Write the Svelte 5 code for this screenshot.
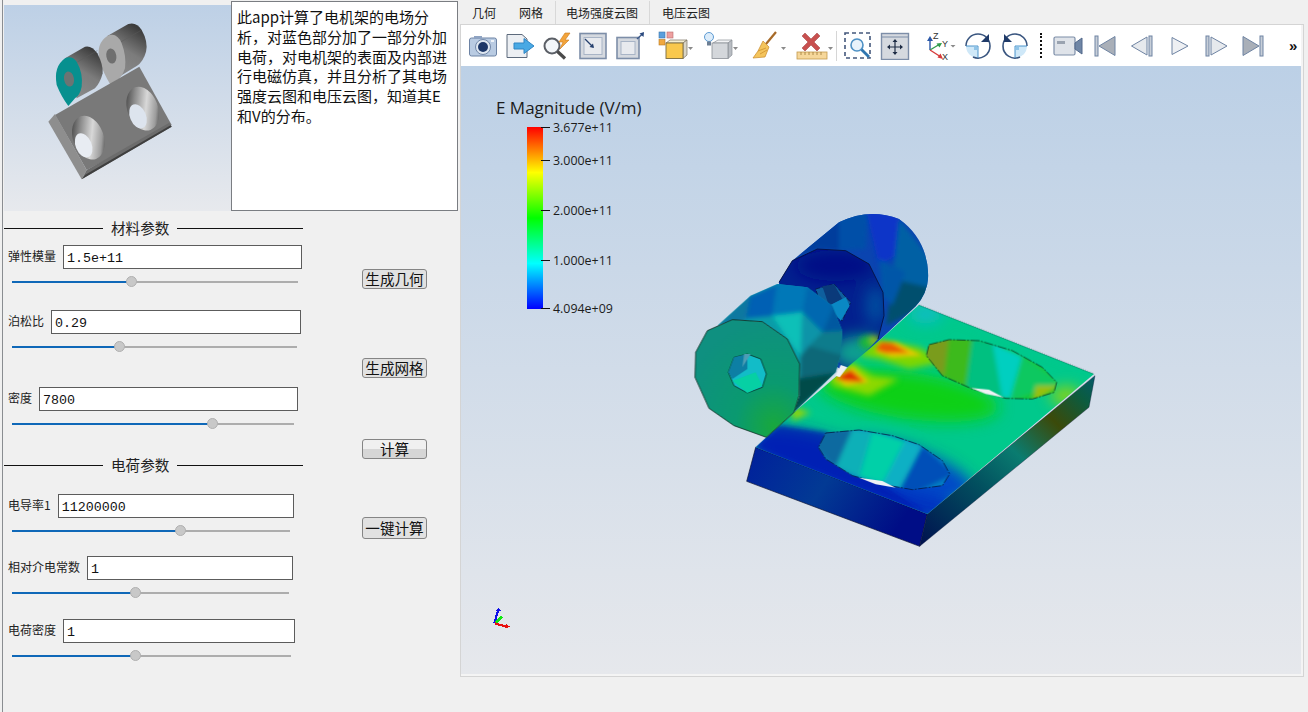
<script>
  const materialRows = [
    { label: '弹性模量', value: '1.5e+11', inputWidth: 239, sliderWidth: 286, pct: 41.6, gap: 7 },
    { label: '泊松比', value: '0.29', inputWidth: 250, sliderWidth: 285, pct: 37.4, gap: 23 },
    { label: '密度', value: '7800', inputWidth: 259, sliderWidth: 282, pct: 71.8, gap: 35 }
  ]
  const chargeRows = [
    { label: '电导率1', value: '11200000', inputWidth: 236, sliderWidth: 278, pct: 60.9, gap: 19 },
    { label: '相对介电常数', value: '1', inputWidth: 206, sliderWidth: 277, pct: 44.2, gap: 20 },
    { label: '电荷密度', value: '1', inputWidth: 232, sliderWidth: 279, pct: 44.2, gap: 21 }
  ]
  const tabs = ['几何', '网格', '电场强度云图', '电压云图']
  const ticks = ['3.677e+11', '3.000e+11', '2.000e+11', '1.000e+11', '4.094e+09']
</script>

<div class="page">
  <div class="left">
    <div class="top">
      <div class="preview">
        <!-- viewBox is 3x page scale, same as the crop the shapes were read from -->
        <svg width="227" height="206" viewBox="-48 -15 681 618">
          <defs>
            <linearGradient id="cylA" x1="0.15" y1="1" x2="0.6" y2="0">
              <stop offset="0" stop-color="#8c8c8c" />
              <stop offset="0.55" stop-color="#7c7c7c" />
              <stop offset="1" stop-color="#3c3c3c" />
            </linearGradient>
            <linearGradient id="holeA" x1="0" y1="0.1" x2="1" y2="0.8">
              <stop offset="0" stop-color="#333" />
              <stop offset="0.3" stop-color="#8a8a8a" />
              <stop offset="0.6" stop-color="#d8d8d8" />
              <stop offset="0.85" stop-color="#9c9c9c" />
              <stop offset="1" stop-color="#484848" />
            </linearGradient>
          </defs>
          <!-- rear lug -->
          <path d="M262 78 L325 42 Q350 35 365 60 Q385 95 378 125 Q370 155 350 168 L290 205 Z" fill="url(#cylA)" />
          <path d="M302 96 L365 60" stroke="#5a5a5a" stroke-width="1.4" />
          <path d="M262 78 Q290 65 305 100 Q320 140 315 175 Q305 205 290 210 L272 225 Q250 190 238 150 Q228 100 262 78 Z" fill="#a9a9a9" />
          <ellipse cx="274" cy="138" rx="15" ry="23" transform="rotate(-10 274 138)" fill="#6f6f6f" />
          <!-- front lug -->
          <path d="M135 145 L195 110 Q215 105 232 130 Q250 165 248 190 Q240 220 225 235 L170 265 Z" fill="url(#cylA)" />
          <path d="M172 156 L232 122" stroke="#5a5a5a" stroke-width="1.4" />
          <path d="M135 145 Q155 135 170 155 Q190 190 185 230 Q180 255 165 265 L145 288 Q125 262 110 225 Q100 170 135 145 Z" fill="#07908f" />
          <ellipse cx="147" cy="207" rx="15" ry="23" transform="rotate(-10 147 207)" fill="#6b7473" />
          <!-- plate -->
          <path d="M105 315 L358 170 L455 345 L200 480 Z" fill="#797979" />
          <path d="M85 335 L105 312 L200 480 L185 508 Z" fill="#8e8e8e" />
          <path d="M185 508 L200 480 L448 338 L455 350 Z" fill="#6c6c6c" />
          <path d="M185 508 L196 494 L452 346 L455 350 Z" fill="#3f3f3f" />
          <!-- countersunk holes -->
          <ellipse cx="205" cy="383" rx="46" ry="68" transform="rotate(-20 205 383)" fill="url(#holeA)" />
          <ellipse cx="191" cy="406" rx="24" ry="38" transform="rotate(-22 191 406)" fill="#e8ecf2" />
          <ellipse cx="368" cy="296" rx="46" ry="68" transform="rotate(-20 368 296)" fill="url(#holeA)" />
          <ellipse cx="354" cy="319" rx="24" ry="38" transform="rotate(-22 354 319)" fill="#dde4ee" />
        </svg>
      </div>
      <div class="note">此app计算了电机架的电场分析，对蓝色部分加了一部分外加电荷，对电机架的表面及内部进行电磁仿真，并且分析了其电场强度云图和电压云图，知道其E和V的分布。</div>
    </div>

    <div class="controls">
      <div class="params">
        <div class="section first"><span>材料参数</span></div>
        {#each materialRows as row}
          <div class="row" style="margin-top: {row.gap}px">
            <div class="field">
              <span class="label">{row.label}</span>
              <input class="num" value={row.value} style="width: {row.inputWidth}px" />
            </div>
            <input class="slider" type="range" min="0" max="100" step="0.1" value={row.pct} style="width: {row.sliderWidth}px; --pct: {row.pct}%" />
          </div>
        {/each}
        <div class="section second"><span>电荷参数</span></div>
        {#each chargeRows as row}
          <div class="row" style="margin-top: {row.gap}px">
            <div class="field">
              <span class="label">{row.label}</span>
              <input class="num" value={row.value} style="width: {row.inputWidth}px" />
            </div>
            <input class="slider" type="range" min="0" max="100" step="0.1" value={row.pct} style="width: {row.sliderWidth}px; --pct: {row.pct}%" />
          </div>
        {/each}
      </div>
      <div class="actions">
        <button class="b1">生成几何</button>
        <button class="b2">生成网格</button>
        <button class="b3">计算</button>
        <button class="b4">一键计算</button>
      </div>
    </div>
  </div>

  <div class="right">
    <div class="tabs">
      {#each tabs as tab}
        <span class="tab">{tab}</span>
      {/each}
    </div>
    <div class="frame">
      <div class="toolbar">
        <!-- camera -->
        <svg class="ic m5" width="30" height="26" viewBox="0 0 30 26">
          <rect x="1.5" y="5" width="27" height="18" rx="2" fill="#b9cbe2" stroke="#6d83a4" />
          <rect x="6" y="3" width="8" height="3" fill="#8ea3c2" />
          <circle cx="15" cy="14" r="7.5" fill="#dfe7f1" stroke="#7187a8" />
          <circle cx="15" cy="14" r="5" fill="#1d3768" />
          <rect x="23" y="7" width="3" height="2" fill="#eef3f9" />
        </svg>
        <!-- export -->
        <svg class="ic m7" width="30" height="28" viewBox="0 0 30 28">
          <path d="M2 2.5 H17 L22 7 V25.5 H2 Z" fill="#eceff3" stroke="#5d6a7c" />
          <path d="M9 11 H19 V6.5 L29 14 L19 21.5 V17 H9 Z" fill="#49a9e4" stroke="#2f85c4" />
        </svg>
        <!-- zoom bolt -->
        <svg class="ic m6" width="30" height="28" viewBox="0 0 30 28">
          <circle cx="11" cy="14" r="7.5" fill="#f3f6f9" stroke="#5b5f66" stroke-width="2" />
          <path d="M16.5 19.5 L24 26.5" stroke="#4a4a4a" stroke-width="3.2" />
          <path d="M24 1 L18 10 H22 L19 17 L28 8 H24 L29 1 Z" fill="#f3a43b" stroke="#c97b1c" stroke-width="0.6" />
        </svg>
        <!-- zoom to box -->
        <svg class="ic m7" width="30" height="28" viewBox="0 0 30 28">
          <rect x="2" y="1.5" width="26" height="25" fill="#d5d9df" stroke="#7d8ea8" stroke-width="1.6" />
          <rect x="6" y="5.5" width="18" height="17" fill="#e8eaee" stroke="#a8b4c6" />
          <path d="M7 7 L15 15" stroke="#26406e" stroke-width="1.2" />
          <path d="M16 16 L11.5 15 L15 11.5 Z" fill="#26406e" />
        </svg>
        <!-- zoom out box -->
        <svg class="ic m7" width="30" height="28" viewBox="0 0 30 28">
          <rect x="2" y="5.5" width="22" height="21" fill="#d5d9df" stroke="#7d8ea8" stroke-width="1.6" />
          <rect x="6" y="9.5" width="14" height="13" fill="#e8eaee" stroke="#a8b4c6" />
          <path d="M22 7 L28 1.5" stroke="#3d5a8a" stroke-width="1.4" />
          <path d="M29 0 L28.5 5 L24.5 1.5 Z" fill="#2b4a7f" />
        </svg>
        <!-- representation cube -->
        <svg class="ic m13" width="38" height="30" viewBox="0 0 38 30">
          <rect x="1" y="1" width="6" height="6" fill="#5a9fdc" stroke="#3c77ad" stroke-width="0.6" />
          <rect x="9" y="1" width="6" height="6" fill="#eea0a0" stroke="#b86b6b" stroke-width="0.6" />
          <rect x="1" y="8.5" width="6" height="5.5" fill="#f0a840" stroke="#b87a22" stroke-width="0.6" />
          <path d="M8 12 L12 9 H29 L25 12 Z" fill="#f6efd0" stroke="#7a7160" stroke-width="0.7" />
          <path d="M25 12 L29 9 V24 L25 27.5 Z" fill="#d9d5c6" stroke="#7a7160" stroke-width="0.7" />
          <rect x="8" y="12" width="17" height="15.5" fill="#f9c84c" stroke="#7a6a3e" stroke-width="0.9" />
          <path d="M30 16 H35 L32.5 19 Z" fill="#8a8a8a" />
        </svg>
        <!-- light cube -->
        <svg class="ic m7" width="38" height="30" viewBox="0 0 38 30">
          <circle cx="6" cy="6" r="4.5" fill="#dcecfa" stroke="#5d9bd2" />
          <rect x="4" y="10.5" width="4" height="4" fill="#6d7f94" />
          <path d="M10 12 L15 9 H29 L25 12 Z" fill="#f2f3f5" stroke="#8a8f96" stroke-width="0.7" />
          <path d="M25 12 L29 9 V24 L25 27.5 Z" fill="#b9bdc3" stroke="#8a8f96" stroke-width="0.7" />
          <rect x="9" y="12" width="16" height="15.5" fill="#d4d7db" stroke="#8a8f96" stroke-width="0.8" />
          <path d="M30 16 H35 L32.5 19 Z" fill="#8a8a8a" />
        </svg>
        <!-- broom -->
        <svg class="ic m11" width="38" height="30" viewBox="0 0 38 30">
          <path d="M24 1 L14 13" stroke="#a76a28" stroke-width="2.2" />
          <path d="M11 10 L17 16 L13 26 L1 27 L6 20 Z" fill="#f4c45c" stroke="#c98a2a" stroke-width="0.7" />
          <path d="M6 20 L14 17 M8 23 L15 19" stroke="#c98a2a" stroke-width="0.7" />
          <path d="M29 16 H34 L31.5 19 Z" fill="#8a8a8a" />
        </svg>
        <!-- delete ruler -->
        <svg class="ic m6" width="38" height="30" viewBox="0 0 38 30">
          <path d="M7 3 L13 9 L19 3 L22 6 L16 12 L22 18 L19 21 L13 15 L7 21 L4 18 L10 12 L4 6 Z" fill="#c8504f" stroke="#9e3b3a" stroke-width="0.5" transform="translate(2 -1)" />
          <rect x="1" y="21" width="30" height="7" fill="#f6d79a" stroke="#c49a4d" stroke-width="0.8" />
          <path d="M5 21 V24 M9 21 V24 M13 21 V24 M17 21 V24 M21 21 V24 M25 21 V24" stroke="#a07a35" stroke-width="0.8" />
          <path d="M32 16 H37 L34.5 19 Z" fill="#8a8a8a" />
        </svg>
        <span class="divider"></span>
        <!-- rubber band zoom -->
        <svg class="ic m6" width="30" height="30" viewBox="0 0 30 30">
          <rect x="2" y="2" width="25" height="25" fill="none" stroke="#44587c" stroke-width="1.6" stroke-dasharray="4 3" />
          <circle cx="14" cy="14" r="6" fill="#e7f2fb" stroke="#4d90c4" stroke-width="1.6" />
          <path d="M18.5 18.5 L26 26" stroke="#2f76b0" stroke-width="2.8" />
        </svg>
        <!-- reset -->
        <svg class="ic m7" width="30" height="28" viewBox="0 0 30 28">
          <rect x="1.5" y="1.5" width="27" height="26" fill="#d5d9df" stroke="#7d8ea8" stroke-width="1.4" />
          <path d="M1.5 5 H28.5" stroke="#7d8ea8" />
          <path d="M15 8 V22 M8 15 H22" stroke="#1e2c44" stroke-width="1.2" />
          <path d="M15 7 L12.5 10 H17.5 Z M15 23 L12.5 20 H17.5 Z M7 15 L10 12.5 V17.5 Z M23 15 L20 12.5 V17.5 Z" fill="#1e2c44" />
        </svg>
        <!-- axes -->
        <svg class="ic m13" width="34" height="30" viewBox="0 0 34 30">
          <path d="M7 19 V8" stroke="#2b58a8" stroke-width="1.4" />
          <path d="M7 5 L4 10 H10 Z" fill="#2b58a8" />
          <path d="M7 19 L17 13" stroke="#2f9c4a" stroke-width="1.4" />
          <path d="M19 12 L13.5 12.5 L16.5 16.5 Z" fill="#2f9c4a" />
          <path d="M7 19 L18 26" stroke="#d63a3a" stroke-width="1.4" />
          <path d="M20 28 L14.5 26.5 L17.5 22.5 Z" fill="#d63a3a" />
          <text x="10" y="8" class="axis">Z</text>
          <text x="19" y="16" class="axis">Y</text>
          <text x="19" y="29" class="axis">X</text>
          <path d="M27.5 14 H32.5 L30 16.5 Z" fill="#8a8a8a" />
        </svg>
        <!-- rotate cw -->
        <svg class="ic m6" width="30" height="30" viewBox="0 0 30 30">
          <path d="M3 15 H15 V27 A12 12 0 0 1 3 15 Z" fill="#cfe8f8" />
          <path d="M3 15 A12 12 0 1 1 27 15 A12 12 0 0 1 10 26" fill="none" stroke="#39557f" stroke-width="1.6" />
          <path d="M3 15 H15 M15 15 V27" stroke="#3b8bc6" stroke-width="0.9" />
          <rect x="11" y="15.5" width="3.5" height="3.5" fill="#8fc4e8" />
          <path d="M26 3 V11 H18 Z" fill="#1f3a68" />
        </svg>
        <!-- rotate ccw -->
        <svg class="ic m7" width="30" height="30" viewBox="0 0 30 30">
          <path d="M15 15 H27 A12 12 0 0 1 15 27 Z" fill="#cfe8f8" />
          <path d="M27 15 A12 12 0 1 0 3 15 A12 12 0 0 0 20 26" fill="none" stroke="#39557f" stroke-width="1.6" />
          <path d="M15 15 H27 M15 15 V27" stroke="#3b8bc6" stroke-width="0.9" />
          <rect x="15.5" y="15.5" width="3.5" height="3.5" fill="#8fc4e8" />
          <path d="M4 3 V11 H12 Z" fill="#1f3a68" />
        </svg>
        <span class="dots"></span>
        <!-- video camera -->
        <svg class="ic m11" width="30" height="22" viewBox="0 0 30 22">
          <rect x="1" y="2" width="21" height="18" rx="1.5" fill="#dfe3e9" stroke="#7d8ea8" stroke-width="1.2" />
          <rect x="4" y="6" width="8" height="3" fill="#9aa3b0" />
          <path d="M22 8 L29 3 V19 L22 14 Z" fill="#6f86a6" stroke="#52698b" />
        </svg>
        <!-- first -->
        <svg class="ic m10" width="24" height="22" viewBox="0 0 24 22">
          <rect x="2" y="1" width="3" height="20" fill="#c7ced8" stroke="#6f84a3" />
          <path d="M22 1.5 V20.5 L6 11 Z" fill="#a9afb8" stroke="#6f84a3" />
        </svg>
        <!-- back -->
        <svg class="ic m13" width="24" height="22" viewBox="0 0 24 22">
          <path d="M17 2 V20 L1.5 11 Z" fill="#e6e9ed" stroke="#6f84a3" />
          <rect x="19" y="1" width="3" height="20" fill="#c7ced8" stroke="#6f84a3" />
        </svg>
        <!-- play -->
        <svg class="ic m14" width="24" height="22" viewBox="0 0 24 22">
          <path d="M4 2.5 V19.5 L20 11 Z" fill="#eef0f3" stroke="#6f84a3" />
        </svg>
        <!-- forward -->
        <svg class="ic m12" width="24" height="22" viewBox="0 0 24 22">
          <rect x="2" y="1" width="3" height="20" fill="#c7ced8" stroke="#6f84a3" />
          <path d="M7 2 V20 L23 11 Z" fill="#e6e9ed" stroke="#6f84a3" />
        </svg>
        <!-- last -->
        <svg class="ic m13" width="24" height="22" viewBox="0 0 24 22">
          <path d="M2 1.5 V20.5 L18 11 Z" fill="#a9afb8" stroke="#6f84a3" />
          <rect x="19" y="1" width="3" height="20" fill="#c7ced8" stroke="#6f84a3" />
        </svg>
        <span class="more">»</span>
      </div>

      <div class="view">
        <div class="legend">
          <div class="legend-title">E Magnitude (V/m)</div>
          <div class="scale">
            <div class="bar"></div>
            <div class="ticks">
              {#each ticks as t, i}
                <div class="tick t{i}"><i></i><span>{t}</span></div>
              {/each}
            </div>
          </div>
        </div>

        <!-- field result, drawn in 3x coordinates -->
        <svg class="model" width="430" height="360" viewBox="0 0 1290 1080">
          <defs>
            <filter id="soft" x="-30%" y="-30%" width="160%" height="160%"><feGaussianBlur stdDeviation="22" /></filter>
            <filter id="soft2" x="-30%" y="-30%" width="160%" height="160%"><feGaussianBlur stdDeviation="9" /></filter>
            <filter id="soft3" x="-10%" y="-10%" width="120%" height="120%"><feGaussianBlur stdDeviation="6" /></filter>
            <clipPath id="plateClip"><path d="M720 318 L1245 525 L745 945 L230 745 L345 640 L600 425 Z" /></clipPath>
            <clipPath id="rearClip"><path d="M300 250 L340 185 L480 70 Q570 25 660 60 Q745 120 748 230 Q745 285 710 322 L600 425 L500 520 L300 400 Z" /></clipPath>
            <clipPath id="rearFace"><path d="M300 250 L340 185 L415 150 L500 155 L570 195 L612 280 L615 350 L597 420 L500 520 L420 400 Z" /></clipPath>
            <clipPath id="frontBody"><path d="M115 380 L215 290 L295 255 L385 265 L460 320 L490 395 L485 470 L470 520 L345 640 L362 590 L362 495 L325 420 L250 368 L160 362 Z" /></clipPath>
            <clipPath id="hole1"><path d="M750 437 L810 422 L900 425 L1000 455 L1090 505 L1133 550 L1125 580 L1060 600 L980 598 L880 570 L790 530 L742 470 Z" /></clipPath>
            <clipPath id="hole2"><path d="M440 702 L540 693 L640 710 L720 737 L790 785 L812 825 L790 860 L700 872 L620 858 L520 830 L440 780 L418 745 Z" /></clipPath>
            <linearGradient id="frontSide" x1="0" y1="0" x2="1" y2="0.35">
              <stop offset="0" stop-color="#001f9c" />
              <stop offset="0.5" stop-color="#023a94" />
              <stop offset="1" stop-color="#000d86" />
            </linearGradient>
            <linearGradient id="rightSide" x1="0" y1="1" x2="1" y2="0">
              <stop offset="0" stop-color="#00104f" />
              <stop offset="0.35" stop-color="#02505f" />
              <stop offset="0.55" stop-color="#0a7c70" />
              <stop offset="0.75" stop-color="#3b4a0a" />
              <stop offset="0.9" stop-color="#0b5c40" />
              <stop offset="1" stop-color="#04596a" />
            </linearGradient>
            <radialGradient id="faceFill" cx="0.75" cy="0.9" r="0.9">
              <stop offset="0" stop-color="#18a83e" />
              <stop offset="0.4" stop-color="#0a9a70" />
              <stop offset="1" stop-color="#0f9080" />
            </radialGradient>
          </defs>

          <!-- rear cylinder body -->
          <g clip-path="url(#rearClip)">
            <rect x="280" y="20" width="500" height="520" fill="#0a44b0" />
            <g filter="url(#soft3)">
              <path d="M320 180 L480 60 L500 155 L415 150 Z" fill="#033e9c" />
              <path d="M480 60 L570 20 L560 150 L480 155 Z" fill="#0050a8" />
              <path d="M560 30 L660 50 L700 140 L600 200 Z" fill="#0a34c8" />
              <path d="M660 60 L770 200 L770 290 L640 240 Z" fill="#0260a4" />
              <path d="M640 240 L770 270 L700 340 L620 380 Z" fill="#064f6e" />
              <path d="M600 180 L680 220 L640 320 L610 290 Z" fill="#0457a8" />
            </g>
          </g>
          <!-- rear cylinder face -->
          <g clip-path="url(#rearFace)">
            <rect x="280" y="140" width="350" height="390" fill="#02208e" />
            <g filter="url(#soft)">
              <ellipse cx="470" cy="200" rx="120" ry="46" fill="#000f86" />
              <ellipse cx="590" cy="320" rx="30" ry="60" fill="#0250a0" />
              <ellipse cx="540" cy="460" rx="80" ry="50" fill="#0aa090" />
            </g>
            <g filter="url(#soft2)">
              <ellipse cx="570" cy="430" rx="30" ry="22" fill="#1eb838" />
              <ellipse cx="588" cy="422" rx="12" ry="12" fill="#a8c000" />
            </g>
          </g>
          <path d="M300 250 L340 185 L415 150 L500 155 L570 195 L612 280 L615 350 L597 420" fill="none" stroke="#06103a" stroke-width="2.5" />
          <path d="M410 270 L465 255 L515 310 L490 365 L430 330 Z" fill="#0f5f9e" stroke="#06103a" stroke-width="2" stroke-dasharray="14 5" />
          <path d="M430 262 L465 256 L490 300 L450 320 Z" fill="#0a3a7a" />
          <path d="M450 320 L500 295 L512 320 L485 365 Z" fill="#0a88c4" />

          <!-- plate side faces -->
          <path d="M230 745 L745 945 L722 1042 L203 847 Z" fill="url(#frontSide)" stroke="#0a1030" stroke-width="2" />
          <path d="M745 945 L1248 530 L1230 625 L722 1042 Z" fill="url(#rightSide)" stroke="#0a1030" stroke-width="1" />

          <!-- plate top -->
          <g clip-path="url(#plateClip)">
            <rect x="200" y="300" width="1080" height="680" fill="#00c98c" />
            <g filter="url(#soft)">
              <ellipse cx="520" cy="830" rx="330" ry="85" transform="rotate(21 520 830)" fill="#0030c0" />
              <ellipse cx="700" cy="810" rx="200" ry="60" transform="rotate(21 700 810)" fill="#0248c8" />
              <ellipse cx="690" cy="590" rx="270" ry="70" transform="rotate(8 690 590)" fill="#0cd018" />
              <ellipse cx="1010" cy="380" rx="260" ry="26" transform="rotate(21 1010 380)" fill="#06c8a0" />
              <ellipse cx="740" cy="345" rx="50" ry="28" fill="#10bcc8" />
              <ellipse cx="1160" cy="590" rx="46" ry="24" fill="#a0d600" />
            </g>
            <g filter="url(#soft3)">
              <path d="M440 700 L600 850 L745 945 L230 745 L300 680 Z" fill="#0018b0" opacity="0.75" />
            </g>
            <g filter="url(#soft2)">
              <path d="M590 420 L720 445 L790 490 L690 510 L600 480 L540 470 Z" fill="#7ed600" />
              <path d="M450 530 L520 490 L580 530 L660 540 L570 590 L460 560 Z" fill="#8cd800" />
              <path d="M340 625 L395 640 L340 665 Z" fill="#9cd400" />
            </g>
            <g filter="url(#soft3)">
              <path d="M600 428 L650 430 L730 470 L640 475 L590 460 Z" fill="#e8c800" />
              <path d="M465 535 L520 505 L570 550 L500 560 Z" fill="#e8c800" />
              <path d="M605 430 L640 432 L690 462 L620 462 L590 452 Z" fill="#e85c00" />
              <path d="M470 537 L515 512 L555 548 L500 546 Z" fill="#e03000" />
            </g>
          </g>
          <path d="M720 318 L1245 525" stroke="#0a3030" stroke-width="2" stroke-dasharray="3 3" fill="none" />

          <!-- countersink, back -->
          <g clip-path="url(#hole1)">
            <rect x="720" y="410" width="430" height="200" fill="#18c838" />
            <g filter="url(#soft3)">
              <path d="M735 430 L810 415 L795 535 L735 480 Z" fill="#7a9c1c" />
              <path d="M810 415 L880 415 L860 565 L795 535 Z" fill="#3cba1c" />
              <path d="M880 415 L960 435 L970 600 L860 565 Z" fill="#00c080" />
              <path d="M940 430 L1030 470 L1000 600 L970 600 Z" fill="#00cfc0" />
              <path d="M1030 470 L1145 550 L990 610 Z" fill="#10c860" />
              <path d="M1070 560 L1145 560 L1060 610 Z" fill="#98c010" />
            </g>
          </g>
          <path d="M750 437 L810 422 L900 425 L1000 455 L1090 505 L1133 550 L1125 580 L1060 600 L980 598 L880 570 L790 530 L742 470 Z" fill="none" stroke="#07281c" stroke-width="2.2" stroke-dasharray="28 4 6 4" />
          <path d="M875 567 L930 572 L975 596 L920 585 Z" fill="#eef1f5" />

          <!-- countersink, front -->
          <g clip-path="url(#hole2)">
            <rect x="400" y="680" width="430" height="200" fill="#0280c4" />
            <g filter="url(#soft3)">
              <path d="M410 695 L520 690 L470 805 L410 750 Z" fill="#0b6aa0" />
              <path d="M520 690 L580 695 L540 835 L470 805 Z" fill="#08b0b8" />
              <path d="M580 695 L680 725 L610 855 L540 835 Z" fill="#00d0a8" />
              <path d="M680 720 L730 740 L660 875 L610 855 Z" fill="#0ab0c4" />
              <path d="M730 740 L825 825 L700 885 L660 875 Z" fill="#0450b8" />
            </g>
          </g>
          <path d="M440 702 L540 693 L640 710 L720 737 L790 785 L812 825 L790 860 L700 872 L620 858 L520 830 L440 780 L418 745 Z" fill="none" stroke="#06103a" stroke-width="2.2" stroke-dasharray="28 4 6 4" />
          <path d="M540 836 L610 846 L650 866 L590 856 Z" fill="#eef1f5" />

          <!-- gap between the lugs -->
          <path d="M470 530 L485 498 L505 505 L482 535 Z" fill="#eef1f5" />

          <!-- front cylinder body -->
          <g clip-path="url(#frontBody)">
            <rect x="100" y="240" width="400" height="420" fill="#0a9ca8" />
            <g filter="url(#soft3)">
              <path d="M215 290 L295 255 L280 350 L160 362 Z" fill="#0060b4" />
              <path d="M105 390 L215 280 L200 365 Z" fill="#0a78a0" />
              <path d="M295 245 L385 255 L370 340 L280 350 Z" fill="#0478b8" />
              <path d="M280 350 L370 340 L365 470 L325 420 Z" fill="#08c0b8" />
              <path d="M385 255 L470 310 L430 400 L370 340 Z" fill="#0468b0" />
              <path d="M470 310 L500 395 L430 400 Z" fill="#0558a0" />
              <path d="M370 340 L430 400 L365 470 Z" fill="#0794a8" />
              <path d="M430 400 L500 395 L495 470 L390 440 Z" fill="#087c8c" />
              <path d="M365 470 L390 440 L495 470 L480 520 L362 540 Z" fill="#0a6878" />
              <path d="M350 540 L480 520 L335 650 Z" fill="#064c48" />
            </g>
          </g>
          <path d="M160 362 L250 368 L325 420 L362 495 L360 590 L345 640 L262 715 L165 680 L90 628 L48 535 L50 460 L85 395 Z" fill="url(#faceFill)" stroke="#06281c" stroke-width="2.4" />
          <path d="M165 475 L205 465 L245 480 L262 525 L250 565 L205 582 L165 560 L148 520 Z" fill="#12bcc8" stroke="#06281c" stroke-width="2.2" />
          <path d="M165 475 L205 465 L205 510 L160 540 L148 520 Z" fill="#0d7fa4" />
          <path d="M160 545 L230 520 L250 560 L205 582 Z" fill="#06d0a4" />
          <path d="M195 465 L190 505 L215 465 Z" fill="#4d9db4" />
        </svg>

        <!-- corner orientation axes -->
        <svg class="axes" width="20" height="23" viewBox="0 0 24 26" shape-rendering="crispEdges">
          <path d="M4 20 L9 3" stroke="#1010e8" stroke-width="2.6" fill="none" />
          <path d="M9 1 L12 5 L6 5 Z" fill="#1010e8" />
          <path d="M5 20 L21 25" stroke="#e81010" stroke-width="2.6" fill="none" />
          <path d="M23 24 L18 21 L18 26 Z" fill="#e81010" />
          <path d="M6 19 L13 12" stroke="#10e810" stroke-width="2.6" fill="none" />
        </svg>
      </div>
    </div>
  </div>
</div>

<style>
  :global(body) {
    background: #f0f0f0;
  }

  .page {
    display: flex;
    width: 1308px;
    height: 712px;
    overflow: hidden;
    background: #f0f0f0;
    font-family: "Noto Sans CJK SC", "Liberation Sans", sans-serif;
    color: #111;
  }

  .left {
    width: 458px;
    flex: none;
    margin-left: 2px;
    border-left: 1px solid #8a8d91;
    box-sizing: border-box;
    padding-top: 1px;
  }

  .top {
    display: flex;
    align-items: flex-start;
  }

  .preview {
    width: 227px;
    height: 206px;
    margin: 4px 0 0 1px;
    background: linear-gradient(#bdd0e6, #e7e9ed);
  }

  .preview svg {
    display: block;
  }

  .note {
    width: 227px;
    height: 210px;
    box-sizing: border-box;
    border: 1px solid #7a7d82;
    background: #fff;
    padding: 5px 5px;
    font-size: 15px;
    line-height: 19.8px;
    color: #111;
  }

  .controls {
    display: flex;
    align-items: flex-start;
  }

  .params {
    width: 300px;
    flex: none;
    margin-left: 1px;
  }

  .section {
    display: flex;
    align-items: center;
    gap: 8px;
    height: 20px;
    font-size: 14.6px;
    line-height: 20px;
    color: #222;
    white-space: nowrap;
  }

  .section::before,
  .section::after {
    content: "";
    flex: none;
    height: 1px;
    background: #111;
  }

  .section::before {
    width: 99px;
  }

  .section::after {
    width: 126px;
  }

  .section.first {
    margin-top: 7px;
  }

  .section.second {
    margin-top: 26px;
  }

  .row {
    height: 42px;
    padding-left: 3px;
  }

  .field {
    display: flex;
    align-items: center;
    gap: 7px;
    padding-left: 1px;
  }

  .label {
    font-size: 12px;
    line-height: 16px;
    color: #222;
    margin-top: -3px;
    white-space: nowrap;
  }

  .num {
    height: 24px;
    box-sizing: border-box;
    border: 1px solid #5c5c5c;
    background: #fff;
    padding: 2px 3px 0;
    font-family: "Liberation Mono", "Noto Sans CJK SC", monospace;
    font-size: 13.33px;
    color: #111;
    outline: none;
    border-radius: 0;
  }

  .slider {
    display: block;
    appearance: none;
    -webkit-appearance: none;
    height: 11px;
    margin: 7px 0 0 5px;
    padding: 0;
    background: linear-gradient(to right, #0f68b8 var(--pct), #adadad var(--pct)) center / 100% 2px no-repeat;
  }

  .slider::-webkit-slider-thumb {
    -webkit-appearance: none;
    width: 11px;
    height: 11px;
    border-radius: 50%;
    background: #c8c8c8;
    border: 1px solid #b0b0b0;
    box-sizing: border-box;
  }

  .actions {
    display: flex;
    flex-direction: column;
    align-items: flex-start;
    margin-left: 58px;
    padding-top: 58px;
  }

  .actions button {
    width: 65px;
    height: 20px;
    padding: 0;
    box-sizing: border-box;
    border: 1px solid #858585;
    border-radius: 3px;
    background: #e1e1e1;
    font-family: "Noto Sans CJK SC", sans-serif;
    font-size: 14.6px;
    line-height: 16px;
    color: #111;
  }

  .actions .b2 {
    margin-top: 69px;
  }

  .actions .b3 {
    margin-top: 61px;
    background: linear-gradient(#f0f0f0 50%, #d6d6d6 50%);
  }

  .actions .b4 {
    margin-top: 58px;
    height: 22px;
  }

  .right {
    flex: none;
    width: 845px;
    padding-top: 1px;
  }

  .tabs {
    display: flex;
    height: 23px;
    font-size: 12px;
    line-height: 23px;
    color: #222;
  }

  .tab {
    padding: 0 11px;
  }

  .tab:nth-child(1) {
    padding: 0 12px;
  }

  .tab:nth-child(2) {
    padding: 0 12px 0 11px;
    border-right: 1px solid #d8d8d8;
  }

  .tab:nth-child(3) {
    padding: 0 11px 0 10px;
    border-right: 1px solid #d8d8d8;
  }

  .tab:nth-child(4) {
    padding: 0 12px;
  }

  .frame {
    width: 844px;
    height: 653px;
    box-sizing: border-box;
    border: 1px solid #d4d4d4;
    padding-right: 2px;
    padding-bottom: 2px;
    background: #f4f4f4;
    display: flex;
    flex-direction: column;
  }

  .toolbar {
    display: flex;
    align-items: center;
    height: 41px;
    flex: none;
    background: #fff;
    padding-left: 2px;
    overflow: hidden;
  }

  .ic {
    flex: none;
    display: block;
  }

  .m5 { margin-left: 5px; }
  .m6 { margin-left: 6px; }
  .m7 { margin-left: 7px; }
  .m10 { margin-left: 10px; }
  .m11 { margin-left: 11px; }
  .m12 { margin-left: 12px; }
  .m13 { margin-left: 13px; }
  .m14 { margin-left: 14px; }

  .axis {
    font-family: "Liberation Sans", sans-serif;
    font-size: 9px;
    fill: #333;
  }

  .divider {
    width: 1px;
    height: 30px;
    background: #d6d6d6;
    margin-left: 2px;
  }

  .dots {
    height: 25px;
    width: 0;
    border-left: 2px dotted #111;
    margin-left: 10px;
  }

  .more {
    margin-left: 24px;
    font-family: "Liberation Sans", sans-serif;
    font-size: 15px;
    font-weight: 700;
    line-height: 1;
    color: #111;
  }

  .view {
    position: relative;
    flex: 1;
    overflow: hidden;
    background: linear-gradient(#bcd0e6, #e6e8ec);
  }

  .legend {
    position: absolute;
    left: 35px;
    top: 32px;
    font-family: "Open Sans", "Liberation Sans", sans-serif;
  }

  .legend-title {
    font-size: 17px;
    line-height: 20px;
    color: #1c1c1c;
    white-space: nowrap;
  }

  .scale {
    position: relative;
    height: 182px;
    margin: 9px 0 0 31px;
  }

  .bar {
    width: 16px;
    height: 182px;
    background: linear-gradient(#ff0000, #ffff00 25%, #00ff00 50%, #00ffff 75%, #0000ff);
  }

  .ticks {
    position: absolute;
    left: 14px;
    top: 0;
  }

  .tick {
    position: absolute;
    display: flex;
    align-items: center;
    gap: 3px;
    height: 14px;
    font-size: 12.4px;
    color: #1c1c1c;
    white-space: nowrap;
  }

  .tick i {
    display: block;
    width: 9px;
    height: 1px;
    background: #111;
  }

  .t0 { top: -7px; }
  .t1 { top: 26px; }
  .t2 { top: 76px; }
  .t3 { top: 126px; }
  .t4 { top: 174px; }

  .model {
    position: absolute;
    left: 218px;
    top: 133px;
  }

  .axes {
    position: absolute;
    left: 30px;
    top: 540px;
  }
</style>
